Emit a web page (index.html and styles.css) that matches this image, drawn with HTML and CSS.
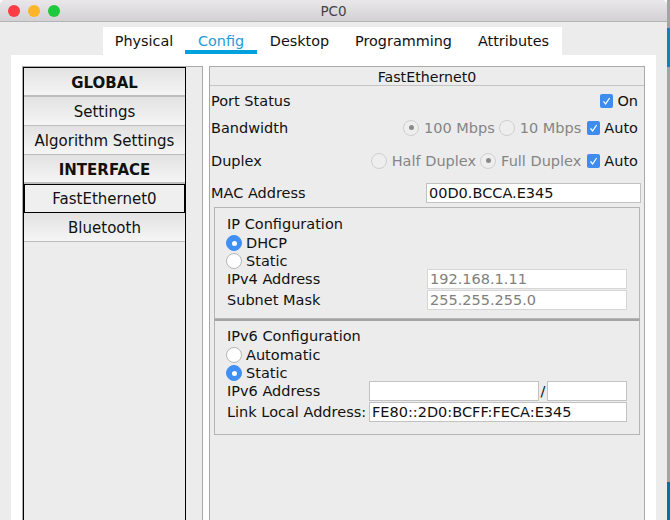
FILE: index.html
```html
<!DOCTYPE html>
<html lang="en">

<head>
    <meta charset="UTF-8">
    <meta name="viewport" content="width=device-width, initial-scale=1.0">
    <title>PC0</title>
    <link rel="stylesheet" href="styles.css">
</head>

<body>
    <div class="window">
        <div class="titlebar">
            <div class="lights">
                <span class="light red"></span>
                <span class="light yellow"></span>
                <span class="light green"></span>
            </div>
            <div class="title">PC0</div>
        </div>

        <div class="tabs">
            <div class="tab">Physical</div>
            <div class="tab active">Config</div>
            <div class="tab">Desktop</div>
            <div class="tab">Programming</div>
            <div class="tab">Attributes</div>
        </div>

        <div class="sheet">
            <div class="side-wrap">
                <div class="side">
                    <div class="side-item head">GLOBAL</div>
                    <div class="side-item">Settings</div>
                    <div class="side-item">Algorithm Settings</div>
                    <div class="side-item head">INTERFACE</div>
                    <div class="side-item selected">FastEthernet0</div>
                    <div class="side-item">Bluetooth</div>
                </div>
            </div>

            <div class="panel">
                <div class="panel-title">FastEthernet0</div>

                <div class="row row-status">
                    <span class="label">Port Status</span>
                    <span class="opts">
                        <span class="check"><svg viewBox="0 0 13 14"><path d="M3.5 7.4 5.6 10 9.6 4"/></svg></span>
                        <span>On</span>
                    </span>
                </div>
                <div class="row row-band">
                    <span class="label">Bandwidth</span>
                    <span class="opts">
                        <span class="radio off on"></span><span class="muted">100 Mbps</span>
                        <span class="radio off"></span><span class="muted">10 Mbps</span>
                        <span class="check"><svg viewBox="0 0 13 14"><path d="M3.5 7.4 5.6 10 9.6 4"/></svg></span>
                        <span>Auto</span>
                    </span>
                </div>
                <div class="row row-duplex">
                    <span class="label">Duplex</span>
                    <span class="opts">
                        <span class="radio off"></span><span class="muted">Half Duplex</span>
                        <span class="radio off on"></span><span class="muted">Full Duplex</span>
                        <span class="check"><svg viewBox="0 0 13 14"><path d="M3.5 7.4 5.6 10 9.6 4"/></svg></span>
                        <span>Auto</span>
                    </span>
                </div>
                <div class="row row-mac">
                    <span class="label">MAC Address</span>
                    <div class="field mac">00D0.BCCA.E345</div>
                </div>

                <div class="group group-v4">
                    <div class="group-title">IP Configuration</div>
                    <div class="choice"><span class="radio sel"></span>DHCP</div>
                    <div class="choice"><span class="radio"></span>Static</div>
                    <div class="lines">
                        <div class="line">
                            <span class="label">IPv4 Address</span>
                            <div class="field wide dim">192.168.1.11</div>
                        </div>
                        <div class="line">
                            <span class="label">Subnet Mask</span>
                            <div class="field wide dim">255.255.255.0</div>
                        </div>
                    </div>
                </div>

                <div class="group group-v6">
                    <div class="group-title">IPv6 Configuration</div>
                    <div class="choice"><span class="radio"></span>Automatic</div>
                    <div class="choice"><span class="radio sel"></span>Static</div>
                    <div class="lines">
                        <div class="line">
                            <span class="label">IPv6 Address</span>
                            <div class="addr">
                                <div class="field addr-main"></div>
                                <span class="slash">/</span>
                                <div class="field addr-prefix"></div>
                            </div>
                        </div>
                        <div class="line">
                            <span class="label">Link Local Address:</span>
                            <div class="field link">FE80::2D0:BCFF:FECA:E345</div>
                        </div>
                    </div>
                </div>
            </div>
        </div>
    </div>

    <div class="desktop-edge"></div>
</body>

</html>
```

FILE: styles.css
```css
* {
    box-sizing: border-box;
}

html,
body {
    margin: 0;
    height: 520px;
    overflow: hidden;
    background-color: #fff;
}

body {
    display: flex;
    font-family: "DejaVu Sans", sans-serif;
    font-size: 14.5px;
    color: #111;
}

.window {
    width: 667px;
    height: 520px;
    background-color: #ececec;
    overflow: hidden;
    border-radius: 5px 5px 0 0;
}

.titlebar {
    display: grid;
    grid-template-columns: 1fr auto 1fr;
    align-items: center;
    height: 22px;
    background: linear-gradient(#e9e7e9, #d3d1d3);
    border-bottom: 1px solid #b4b4b4;
}

.lights {
    display: flex;
    gap: 8px;
    padding-left: 8px;
}

.light {
    width: 12px;
    height: 12px;
    border-radius: 50%;
}

.red {
    background-color: #fc3d44;
}

.yellow {
    background-color: #fdb528;
}

.green {
    background-color: #1ec93c;
}

.title {
    font-size: 13.5px;
    color: #444;
}

.tabs {
    display: grid;
    grid-template-columns: 82px 72px 85px 123px 97px;
    width: 459px;
    height: 28px;
    margin: 5px 0 0 103px;
    background-color: #fff;
}

.tab {
    line-height: 29px;
    font-size: 14.4px;
    text-align: center;
    white-space: nowrap;
}

.tab.active {
    color: #1f9bd7;
    height: 27px;
    border-bottom: 4px solid #00a1dc;
}

.sheet {
    display: flex;
    gap: 6px;
    width: 645px;
    height: 465px;
    margin-left: 11px;
    padding: 11px 11px 0;
    background-color: #fff;
}

.side-wrap {
    width: 181px;
    border: 1px solid #a9a9a9;
    border-bottom: none;
    background-color: #ececec;
}

.side {
    width: 163px;
    height: 100%;
    border: solid #000;
    border-width: 1px 1px 0;
}

.side-item {
    height: 29px;
    line-height: 31px;
    font-size: 15px;
    text-align: center;
    border-bottom: 1px solid #bdbdbd;
    background: linear-gradient(#e2e2e2, #f5f5f5);
}

.side-item.head {
    font-weight: bold;
    border-bottom-width: 2px;
}

.side-item.selected {
    border: 1px solid #000;
    background: #efefef;
    line-height: 29px;
}

.panel {
    flex: 1;
    border: 1px solid #a9a9a9;
    border-bottom: none;
    background-color: #ececec;
}

.panel-title {
    height: 19px;
    line-height: 20px;
    font-size: 14.2px;
    text-align: center;
    border-bottom: 1px solid #c4c4c4;
}

.row {
    display: flex;
    align-items: center;
    justify-content: space-between;
    padding: 0 6px 0 1px;
}

.row-status {
    height: 29px;
}

.row-band {
    height: 25px;
}

.row-duplex {
    height: 41px;
}

.row-mac {
    height: 23px;
    padding-right: 3px;
}

.opts {
    display: flex;
    align-items: center;
    gap: 4px;
}

.muted {
    color: #858585;
}

.radio + .muted {
    margin-left: 1px;
}

.check {
    display: inline-flex;
    width: 13px;
    height: 14px;
    margin-left: 2px;
    border-radius: 2px;
    background-color: #3d8cf0;
}

.check svg {
    width: 13px;
    height: 14px;
    fill: none;
    stroke: #fff;
    stroke-width: 1.3;
}

.radio {
    display: inline-flex;
    align-items: center;
    justify-content: center;
    flex: none;
    width: 16px;
    height: 16px;
    border-radius: 50%;
    background-color: #fff;
    border: 1px solid #b5b5b5;
}

.radio.off {
    background-color: #eee;
    border-color: #cfcfcf;
}

.radio.on::after,
.radio.sel::after {
    content: "";
    width: 5px;
    height: 5px;
    border-radius: 50%;
    background-color: #8a8a8a;
}

.radio.sel {
    background-color: #3f8ff5;
    border-color: #3f8ff5;
}

.radio.sel::after {
    background-color: #fff;
}

.field {
    height: 20px;
    line-height: 18px;
    padding-left: 2px;
    background-color: #fff;
    border: 1px solid #c2c2c2;
    white-space: nowrap;
}

.mac {
    width: 215px;
}

.group {
    width: 426px;
    margin-left: 4px;
    padding: 0 0 0 12px;
    border: 1px solid #b5b5b5;
}

.group-v4 {
    height: 112px;
    margin-top: 3px;
    padding-top: 7px;
}

.group-v6 {
    height: 116px;
    padding-top: 6px;
    border-top: 2px solid #a4a4a4;
}

.group-title {
    height: 19px;
    line-height: 18px;
}

.choice {
    display: flex;
    align-items: center;
    gap: 4px;
    height: 18px;
    margin-left: -1px;
}

.lines {
    margin-top: -2px;
}

.line {
    display: flex;
    align-items: center;
    justify-content: space-between;
    height: 21px;
    padding-right: 12px;
}

.wide {
    width: 200px;
}

.dim {
    color: #808080;
    border-color: #d6d6d6;
}

.addr {
    display: flex;
    align-items: center;
}

.addr-main {
    width: 170px;
}

.slash {
    width: 8px;
    text-align: center;
}

.addr-prefix {
    width: 80px;
}

.link {
    width: 258px;
}

.desktop-edge {
    width: 3px;
    height: 520px;
    background: linear-gradient(#a4a4a4 0 28px, #0a86b8 28px 67px, #a4a4a4 67px 482px, #04739f 482px);
}
```
